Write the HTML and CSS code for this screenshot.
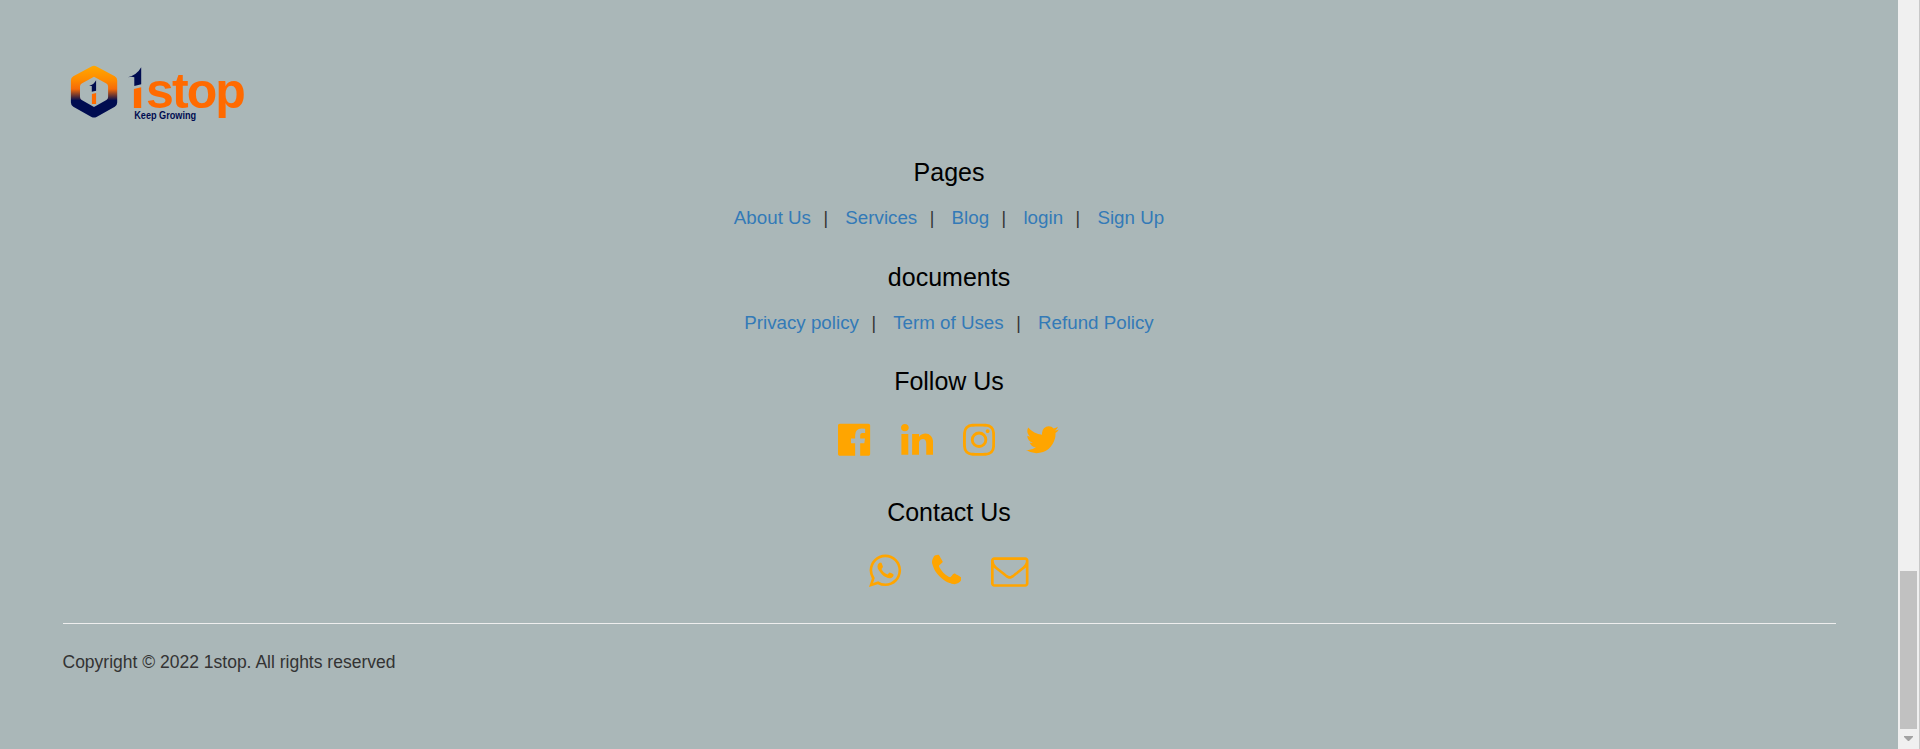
FILE: index.html
```html
<!DOCTYPE html>
<html lang="en">
<head>
<meta charset="utf-8">
<title>1stop</title>
<link rel="stylesheet" href="styles.css">
</head>
<body>
<div class="window">
<footer class="footer">
  <svg class="logo" viewBox="0 0 200 75" role="img" aria-label="1stop Keep Growing">
    <defs>
      <linearGradient id="hex" x1="0" y1="0" x2="0" y2="1">
        <stop offset="0" stop-color="#ffa800"/>
        <stop offset=".28" stop-color="#ff8a00"/>
        <stop offset=".45" stop-color="#f56a08"/>
        <stop offset=".67" stop-color="#000c50"/>
        <stop offset="1" stop-color="#000c50"/>
      </linearGradient>
    </defs>
    <path fill="url(#hex)" fill-rule="evenodd" d="M28.500 6.400Q31 5 33.500 6.400L51.800 16.200Q54.200 17.600 54.200 20.400V42.600Q54.200 45.400 51.800 46.800L33.500 56.900Q31 58.300 28.500 56.900L10.300 46.800Q7.900 45.400 7.900 42.600V20.400Q7.900 17.600 10.300 16.200ZM31 16.800L18.700 23.600Q17 24.600 17 26.600V36.900Q17 38.900 18.700 39.900L31 47L43.400 39.900Q45.100 38.900 45.100 36.900V26.600Q45.100 24.600 43.400 23.600Z"/>
    <path fill="#000c50" d="M33.100 20.300V30.800L28.800 31.700V25.900H26.100Q30.700 24.800 33.100 20.300Z"/>
    <path fill="#ff6a00" d="M28.900 34.100L33.100 32.900V43.900H28.900Z"/>
    <path fill="#000c50" d="M78.200 7.200V24.300L71.300 26.100V17.200Q69 16.500 65 17.200Q74 14.800 78.200 7.200Z"/>
    <path fill="#ff6a00" d="M70.900 29.100L78.200 27.200V47.900H70.900Z"/>
    <text class="logo-name" x="83" y="48.300">stop</text>
    <text class="logo-tag" x="71.200" y="59" textLength="62" lengthAdjust="spacingAndGlyphs">Keep Growing</text>
  </svg>

  <h4 class="title">Pages</h4>
  <ul class="links">
    <li><a href="#">About Us</a>|</li>
    <li><a href="#">Services</a>|</li>
    <li><a href="#">Blog</a>|</li>
    <li><a href="#">login</a>|</li>
    <li><a href="#">Sign Up</a></li>
  </ul>

  <h4 class="title">documents</h4>
  <ul class="links">
    <li><a href="#">Privacy policy</a>|</li>
    <li><a href="#">Term of Uses</a>|</li>
    <li><a href="#">Refund Policy</a></li>
  </ul>

  <h4 class="title">Follow Us</h4>
  <div class="icons">
    <svg viewBox="128 0 1536 1792"><path d="M1579 128q35 0 60 25t25 60v1366q0 35-25 60t-60 25h-391v-595h199l30-232h-229v-148q0-56 23.500-84t91.500-28l122-1v-207q-63-9-178-9-136 0-217.500 80t-81.500 226v171h-200v232h200v595h-735q-35 0-60-25t-25-60v-1366q0-35 25-60t60-25h1366z"/></svg>
    <svg viewBox="128 0 1536 1792"><path d="M477 625v991h-330v-991h330zm21-306q1 73-50.500 122t-135.500 49h-2q-82 0-132-49t-50-122q0-74 51.500-122.500t134.500-48.500 133 48.500 51 122.500zm1166 729v568h-329v-530q0-105-40.500-164.500t-126.500-59.500q-63 0-105.500 34.500t-63.500 85.500q-11 30-11 81v553h-329q2-399 2-647t-1-296l-1-48h329v144h-2q20-32 41-56t56.500-52 87-43.500 114.500-15.500q171 0 275 113.500t104 332.500z"/></svg>
    <svg viewBox="128 0 1536 1792"><path d="M1152 896q0-106-75-181t-181-75-181 75-75 181 75 181 181 75 181-75 75-181zm138 0q0 164-115 279t-279 115-279-115-115-279 115-279 279-115 279 115 115 279zm108-410q0 38-27 65t-65 27-65-27-27-65 27-65 65-27 65 27 27 65zm-502-220q-7 0-76.500-.5t-105.500 0-96.500 3-103 10-71.500 18.500q-50 20-88 58t-58 88q-11 29-18.500 71.500t-10 103-3 96.500 0 105.500.5 76.500-.5 76.500 0 105.500 3 96.500 10 103 18.500 71.500q20 50 58 88t88 58q29 11 71.500 18.500t103 10 96.500 3 105.500 0 76.500-.5 76.500.5 105.500 0 96.500-3 103-10 71.500-18.500q50-20 88-58t58-88q11-29 18.500-71.500t10-103 3-96.500 0-105.500-.5-76.500.5-76.500 0-105.500-3-96.500-10-103-18.500-71.500q-20-50-58-88t-88-58q-29-11-71.500-18.500t-103-10-96.500-3-105.500 0-76.500.5zm768 630q0 229-5 317-10 208-124 322t-322 124q-88 5-317 5t-317-5q-208-10-322-124t-124-322q-5-88-5-317t5-317q10-208 124-322t322-124q88-5 317-5t317 5q208 10 322 124t124 322q5 88 5 317z"/></svg>
    <svg class="wide" viewBox="64 0 1664 1792"><path d="M1684 408q-67 98-162 167 1 14 1 42 0 130-38 259.500t-115.500 248.500-184.500 210.500-258 146-323 54.500q-271 0-496-145 35 4 78 4 225 0 401-138-105-2-188-64.500t-114-159.500q33 5 61 5 43 0 85-11-112-23-185.500-111.500t-73.500-205.500v-4q68 38 146 41-66-44-105-115t-39-154q0-88 44-163 121 149 294.500 238.500t371.500 99.500q-8-38-8-74 0-134 94.500-228.500t228.500-94.500q140 0 236 102 109-21 205-78-37 115-142 178 93-10 186-50z"/></svg>
  </div>

  <h4 class="title">Contact Us</h4>
  <div class="icons contact">
    <svg viewBox="128 0 1536 1792"><path d="M1113 974q13 0 97.500 44t89.500 53q2 5 2 15 0 33-17 76-16 39-71 65.500t-102 26.500q-57 0-190-62-98-45-170-118t-148-185q-72-107-71-194v-8q3-91 74-158 24-22 52-22 6 0 18 1.500t19 1.500q19 0 26.500 6.500t15.500 27.500q8 20 33 88t25 75q0 21-34.500 57.500t-34.500 46.500q0 7 5 15 34 73 102 137 56 53 151 101 12 7 22 7 15 0 54-48.500t52-48.500zm-203 530q127 0 243.500-50t200.500-134 134-200.500 50-243.500-50-243.500-134-200.500-200.500-134-243.500-50-243.500 50-200.500 134-134 200.500-50 243.500q0 203 120 368l-79 233 242-77q158 104 345 104zm0-1382q153 0 292.500 60t240.500 161 161 240.500 60 292.500-60 292.500-161 240.500-240.500 161-292.500 60q-195 0-365-94l-417 134 136-405q-108-178-108-389 0-153 60-292.500t161-240.500 240.500-161 292.500-60z"/></svg>
    <svg class="narrow" viewBox="192 0 1408 1792"><path d="M1600 1240q0 27-10 70.500t-21 68.500q-21 50-122 106-94 51-186 51-27 0-53-3.500t-57.500-12.500-47-14.500-55.500-20.500-49-18q-98-35-175-83-127-79-264-216t-216-264q-48-77-83-175-3-9-18-49t-20.500-55.500-14.500-47-12.500-57.500-3.500-53q0-92 51-186 56-101 106-122 25-11 68.500-21t70.500-10q14 0 21 3 18 6 53 76 11 19 30 54t35 63.500 31 53.500q3 4 17.500 25t21.500 35.500 7 28.500q0 20-28.500 50t-62 55-62 53-28.500 46q0 9 5 22.500t8.500 20.500 14 24 11.500 19q76 137 174 235t235 174q2 1 19 11.500t24 14 20.500 8.500 22.500 5q18 0 46-28.500t53-62 55-62 50-28.500q14 0 28.500 7t35.500 21.500 25 17.500q25 15 53.500 31t63.500 35 54 30q70 35 76 53 3 7 3 21z"/></svg>
    <svg class="full" viewBox="0 0 1792 1792"><path d="M1664 1504v-768q-32 36-69 66-268 206-426 338-51 43-83 67t-86.500 48.500-102.500 24.500h-2q-48 0-102.500-24.500t-86.500-48.500-83-67q-158-132-426-338-37-30-69-66v768q0 13 9.500 22.500t22.500 9.500h1472q13 0 22.500-9.500t9.500-22.500zm0-1051v-24.500l-.5-13-3-12.500-5.500-9-9-7.500-14-2.500h-1472q-13 0-22.500 9.500t-9.500 22.500q0 168 147 284 193 152 401 317 6 5 35 29.500t46 37.500 44.500 31.500 50.500 27.500 43 9h2q20 0 43-9t50.500-27.500 44.500-31.500 46-37.500 35-29.500q208-165 401-317 54-43 100.500-115.500t46.500-131.500zm128-37v1088q0 66-47 113t-113 47h-1472q-66 0-113-47t-47-113v-1088q0-66 47-113t113-47h1472q66 0 113 47t47 113z"/></svg>
  </div>

  <p class="copyright">Copyright © 2022 1stop. All rights reserved</p>
</footer>
<div class="scrollbar">
  <div class="thumb"></div>
  <svg class="arrow" viewBox="0 0 9 5"><path d="M0 0H9V1L5 5H4L0 1Z"/></svg>
</div>
</div>
</body>
</html>
```

FILE: styles.css
```css
* {
  box-sizing: border-box;
}

body {
  margin: 0;
  background: #aab7b8;
  color: #333;
  font: 17.5px/25px "Liberation Sans", Arial, sans-serif;
}

.window {
  display: flex;
  height: 749px;
  overflow: hidden;
}

.footer {
  flex: 1;
  padding: 60px 62.500px 0;
}

.logo {
  display: block;
  width: 200px;
  height: 75px;
}

.logo-name {
  font-size: 50px;
  font-weight: bold;
  letter-spacing: -1.900px;
  fill: #ff6a00;
}

.logo-tag {
  font-size: 10px;
  font-weight: bold;
  fill: #000c50;
}

.title {
  margin: 24px 0 19px;
  color: #000;
  font-size: 25px;
  font-weight: normal;
  line-height: 27px;
  text-align: center;
}

.links {
  display: flex;
  justify-content: center;
  gap: 17.300px;
  height: 27px;
  margin: 0 0 31.500px;
  padding: 0;
  list-style: none;
}

.links li {
  display: flex;
  align-items: baseline;
  gap: 12.500px;
}

.links a {
  color: #337ab7;
  font-size: 18.750px;
  text-decoration: none;
}

.icons {
  display: flex;
  align-items: center;
  justify-content: center;
  gap: 30px;
  height: 40px;
  margin: 24.500px 0 39.500px;
}

.icons.contact {
  margin-bottom: 32.500px;
}

.icons svg {
  width: 32.140px;
  height: 37.500px;
  fill: #ffa500;
}

.icons .wide {
  width: 34.820px;
}

.icons .narrow {
  width: 29.460px;
}

.icons .full {
  width: 37.500px;
}

.copyright {
  margin: 0;
  padding-top: 26px;
  border-top: 1px solid #eee;
}

.scrollbar {
  display: flex;
  flex-direction: column;
  align-items: center;
  justify-content: flex-end;
  gap: 7px;
  width: 22px;
  padding-bottom: 8px;
  background: #f0f0f0;
  border-right: 1px solid #c8c8c8;
}

.thumb {
  width: 17px;
  height: 158px;
  background: #c1c1c1;
}

.arrow {
  width: 9px;
  height: 5px;
  fill: #a3a3a3;
}
```
